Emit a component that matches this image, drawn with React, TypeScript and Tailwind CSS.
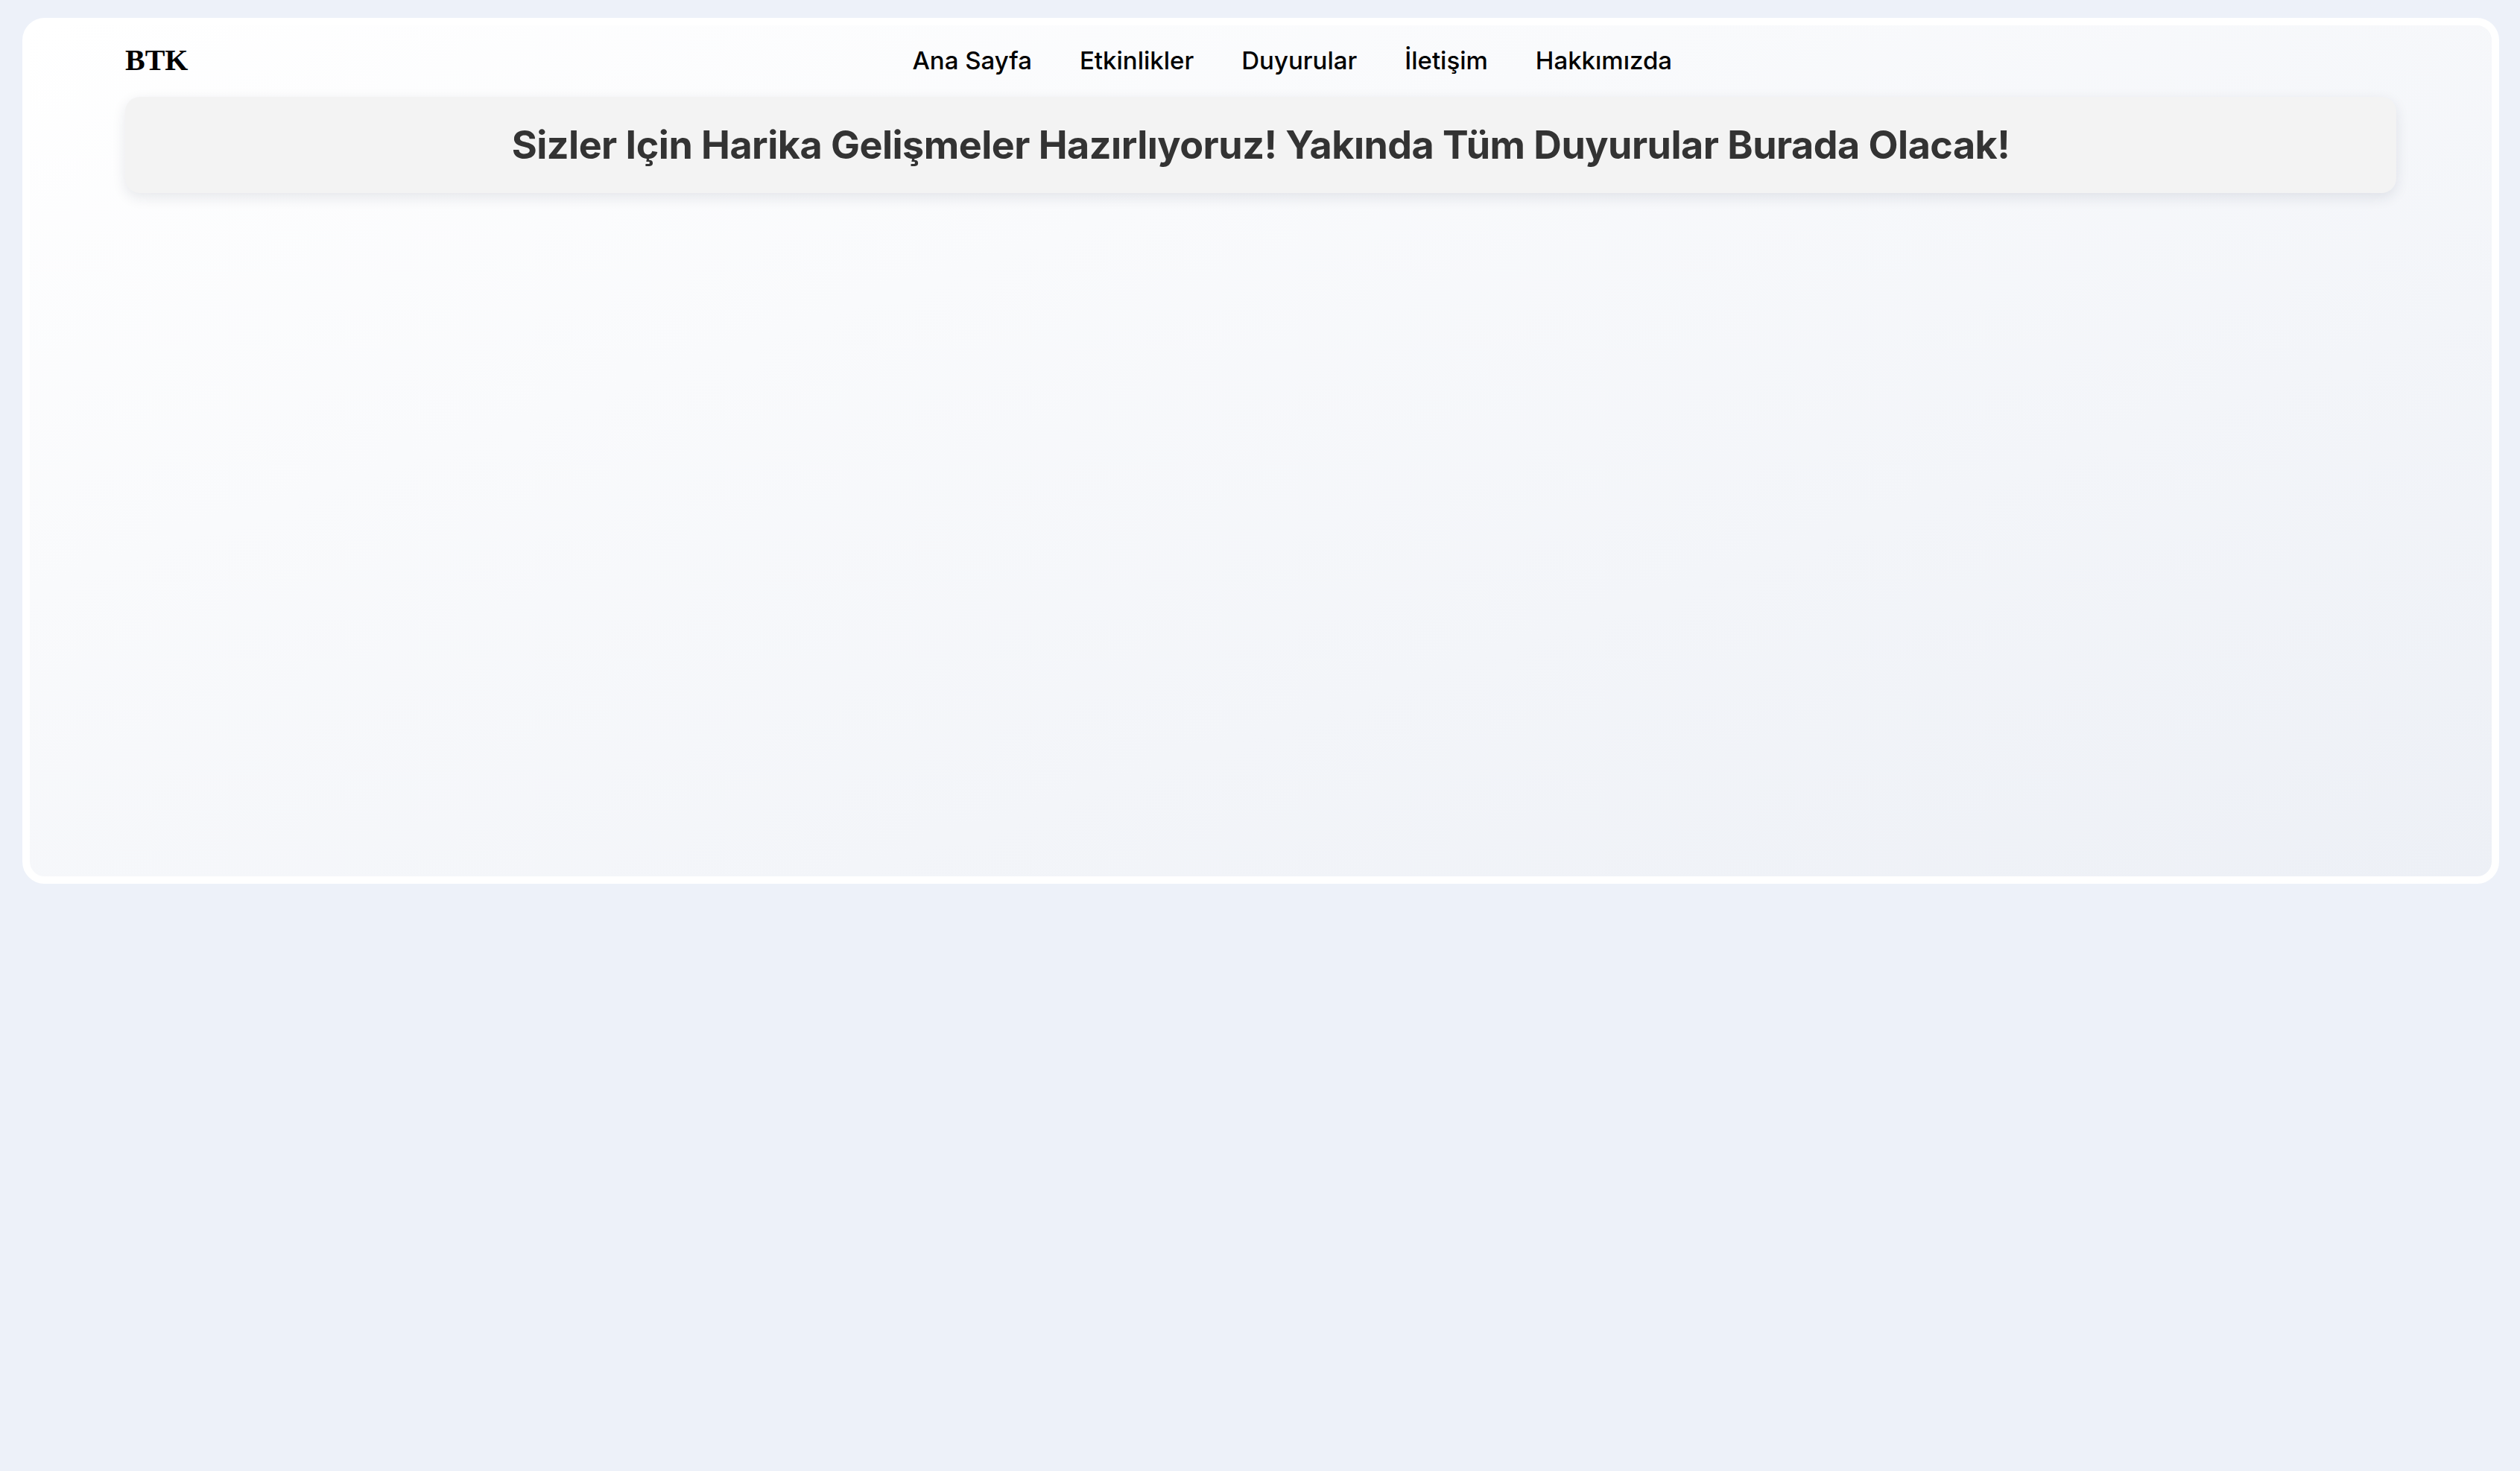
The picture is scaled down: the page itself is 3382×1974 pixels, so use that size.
const links = ['Ana Sayfa', 'Etkinlikler', 'Duyurular', 'İletişim', 'Hakkımızda'];

export default function App() {
  return (
    <div className="min-h-screen w-full bg-[#edf1f9] pt-[24px] pl-[30px] font-['Inter',sans-serif]">
      <div className="w-[3324px] h-[1162px] rounded-[30px] border-[10px] border-white bg-gradient-to-br from-[#ffffff] to-[#edf0f6]">
        <div className="px-[128px]">
          {/* Header */}
          <header className="flex items-center h-[94px]">
            <div className="font-['Liberation_Serif',serif] font-bold text-[40px] text-black leading-none">BTK</div>
            <nav className="flex-1 flex justify-center gap-[64px]">
              {links.map((l) => (
                <a key={l} href="#" className="text-[33px] font-medium text-black leading-none">
                  {l}
                </a>
              ))}
            </nav>
          </header>

          {/* Banner */}
          <div className="mt-[2px] h-[129px] rounded-[20px] bg-[#f3f3f3] shadow-[0_6px_18px_rgba(30,40,70,0.10)] flex items-center justify-center">
            <h1 className="text-[52px] font-bold text-[#333333] leading-none tracking-[-0.5px]">
              Sizler Için Harika Gelişmeler Hazırlıyoruz! Yakında Tüm Duyurular Burada Olacak!
            </h1>
          </div>
        </div>
      </div>
    </div>
  );
}
